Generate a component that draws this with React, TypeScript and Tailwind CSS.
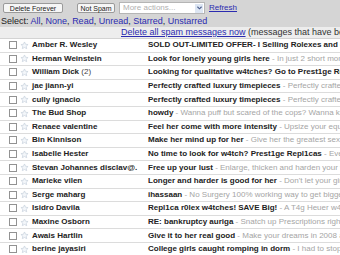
import React from "react";

type Msg = {
  from: string;
  count?: number;
  subject: string;
  snippet: string;
};

const MESSAGES: Msg[] = [
  { from: "Amber R. Wesley", subject: "SOLD OUT-LIMITED OFFER- I Selling Rolexes and cheap", snippet: "" },
  { from: "Herman Weinstein", subject: "Look for lonely young girls here", snippet: "In just 2 short months" },
  { from: "William Dick", count: 2, subject: "Looking for qualitative w4tches? Go to Prest1ge Repl", snippet: "" },
  { from: "jae jiann-yi", subject: "Perfectly crafted luxury timepieces", snippet: "Perfectly crafted" },
  { from: "cully ignacio", subject: "Perfectly crafted luxury timepieces", snippet: "Perfectly crafted" },
  { from: "The Bud Shop", subject: "howdy", snippet: "Wanna puff but scared of the cops? Wanna know" },
  { from: "Renaee valentine", subject: "Feel her come with more intensity", snippet: "Upsize your equipment" },
  { from: "Bin Kinnison", subject: "Make her mind up for her", snippet: "Give her the greatest sex" },
  { from: "Isabelle Hester", subject: "No time to look for w4tch? Prest1ge Repl1cas", snippet: "Every" },
  { from: "Stevan Johannes disclav@.", subject: "Free up your lust", snippet: "Enlarge, thicken and harden your tool" },
  { from: "Marieke vilen", subject: "Longer and harder is good for her", snippet: "Don't let your girl" },
  { from: "Serge maharg", subject: "ihassaan", snippet: "No Surgery 100% working way to get bigger" },
  { from: "Isidro Davila", subject: "Repl1ca r0lex w4tches! SAVE Big!", snippet: "A T4g Heuer w4tch" },
  { from: "Maxine Osborn", subject: "RE: bankruptcy auriga", snippet: "Snatch up Prescriptions right now" },
  { from: "Awais Hartlin", subject: "Give it to her real good", snippet: "Make your dreams in 2008 a" },
  { from: "berine jayasiri", subject: "College girls caught romping in dorm", snippet: "I had to stop" },
];

function Star() {
  return (
    <svg width="9" height="9" viewBox="0 0 24 24" className="shrink-0">
      <path
        d="M12 2.5l2.9 6.2 6.6.7-5 4.5 1.4 6.6L12 17.2l-5.9 3.3 1.4-6.6-5-4.5 6.6-.7z"
        fill="#f3f6fa"
        stroke="#c9d3de"
        strokeWidth="2"
        strokeLinejoin="round"
      />
    </svg>
  );
}

function Row({ m }: { m: Msg }) {
  return (
    <div className="flex items-center h-[13.6px] border-b border-[#dcdcdc] bg-white overflow-hidden whitespace-nowrap">
      <div className="w-[9px] shrink-0" />
      <div className="w-[8px] h-[8px] border border-[#929292] bg-white shrink-0" />
      <div className="w-[3px] shrink-0" />
      <Star />
      <div className="w-[119px] pl-[3px] shrink-0 font-bold text-[#222]">
        {m.from}
        {m.count ? <span className="font-normal text-[#444]"> ({m.count})</span> : null}
      </div>
      <div className="font-bold text-[#222]">
        {m.subject}
        {m.snippet ? <span className="font-normal text-[#a5a5a5]"> - {m.snippet}</span> : null}
      </div>
    </div>
  );
}

export default function App() {
  return (
    <div className="w-[340px] h-[255px] overflow-hidden bg-white text-[8px] leading-none font-['Liberation_Sans',Arial,sans-serif]">
      {/* toolbar */}
      <div className="bg-[#d5d5d5] h-[27px] pt-[2px]">
        <div className="flex items-center h-[12px] pl-[3px]">
          <button className="h-[10px] w-[60px] bg-[#f6f6f6] border border-[#9a9a9a] rounded-[2px] text-[7px] text-[#222] flex items-center justify-center">
            Delete Forever
          </button>
          <button className="ml-[14px] h-[10px] w-[38px] bg-[#f6f6f6] border border-[#9a9a9a] rounded-[2px] text-[7px] text-[#222] flex items-center justify-center">
            Not Spam
          </button>
          <div className="ml-[4px] h-[12px] w-[86px] bg-white border border-[#b5b5b5] flex items-center justify-between pl-[3px] pr-[1px]">
            <span className="text-[#b0b0b0] text-[8px]">More actions...</span>
            <span className="w-[8px] h-[9px] bg-[#dde6f3] flex items-center justify-center">
              <svg width="5" height="4" viewBox="0 0 6 4">
                <path d="M0.5 0.5L3 3 5.5 0.5" fill="none" stroke="#4a5c8a" strokeWidth="1.3" />
              </svg>
            </span>
          </div>
          <span className="ml-[4px] text-[8px] text-[#2b2bb0] underline">Refresh</span>
        </div>
        <div className="mt-[3px] pl-[1px] text-[9px] text-[#222] whitespace-nowrap">
          Select:{" "}
          <span className="text-[#2b2bb0]">All</span>,{" "}
          <span className="text-[#2b2bb0]">None</span>,{" "}
          <span className="text-[#2b2bb0]">Read</span>,{" "}
          <span className="text-[#2b2bb0]">Unread</span>,{" "}
          <span className="text-[#2b2bb0]">Starred</span>,{" "}
          <span className="text-[#2b2bb0]">Unstarred</span>
        </div>
      </div>

      {/* delete-all bar */}
      <div className="h-[12px] bg-[#ededed] border-b border-[#d3d3d3] pl-[121px] flex items-center whitespace-nowrap overflow-hidden text-[9px]">
        <span className="text-[#2b2bb0] underline">Delete all spam messages now</span>
        <span className="text-[#333]">&nbsp;(messages that have been in Spam more than 30 days)</span>
      </div>

      {/* message list */}
      <div>
        {MESSAGES.map((m, i) => (
          <Row key={i} m={m} />
        ))}
      </div>
    </div>
  );
}
